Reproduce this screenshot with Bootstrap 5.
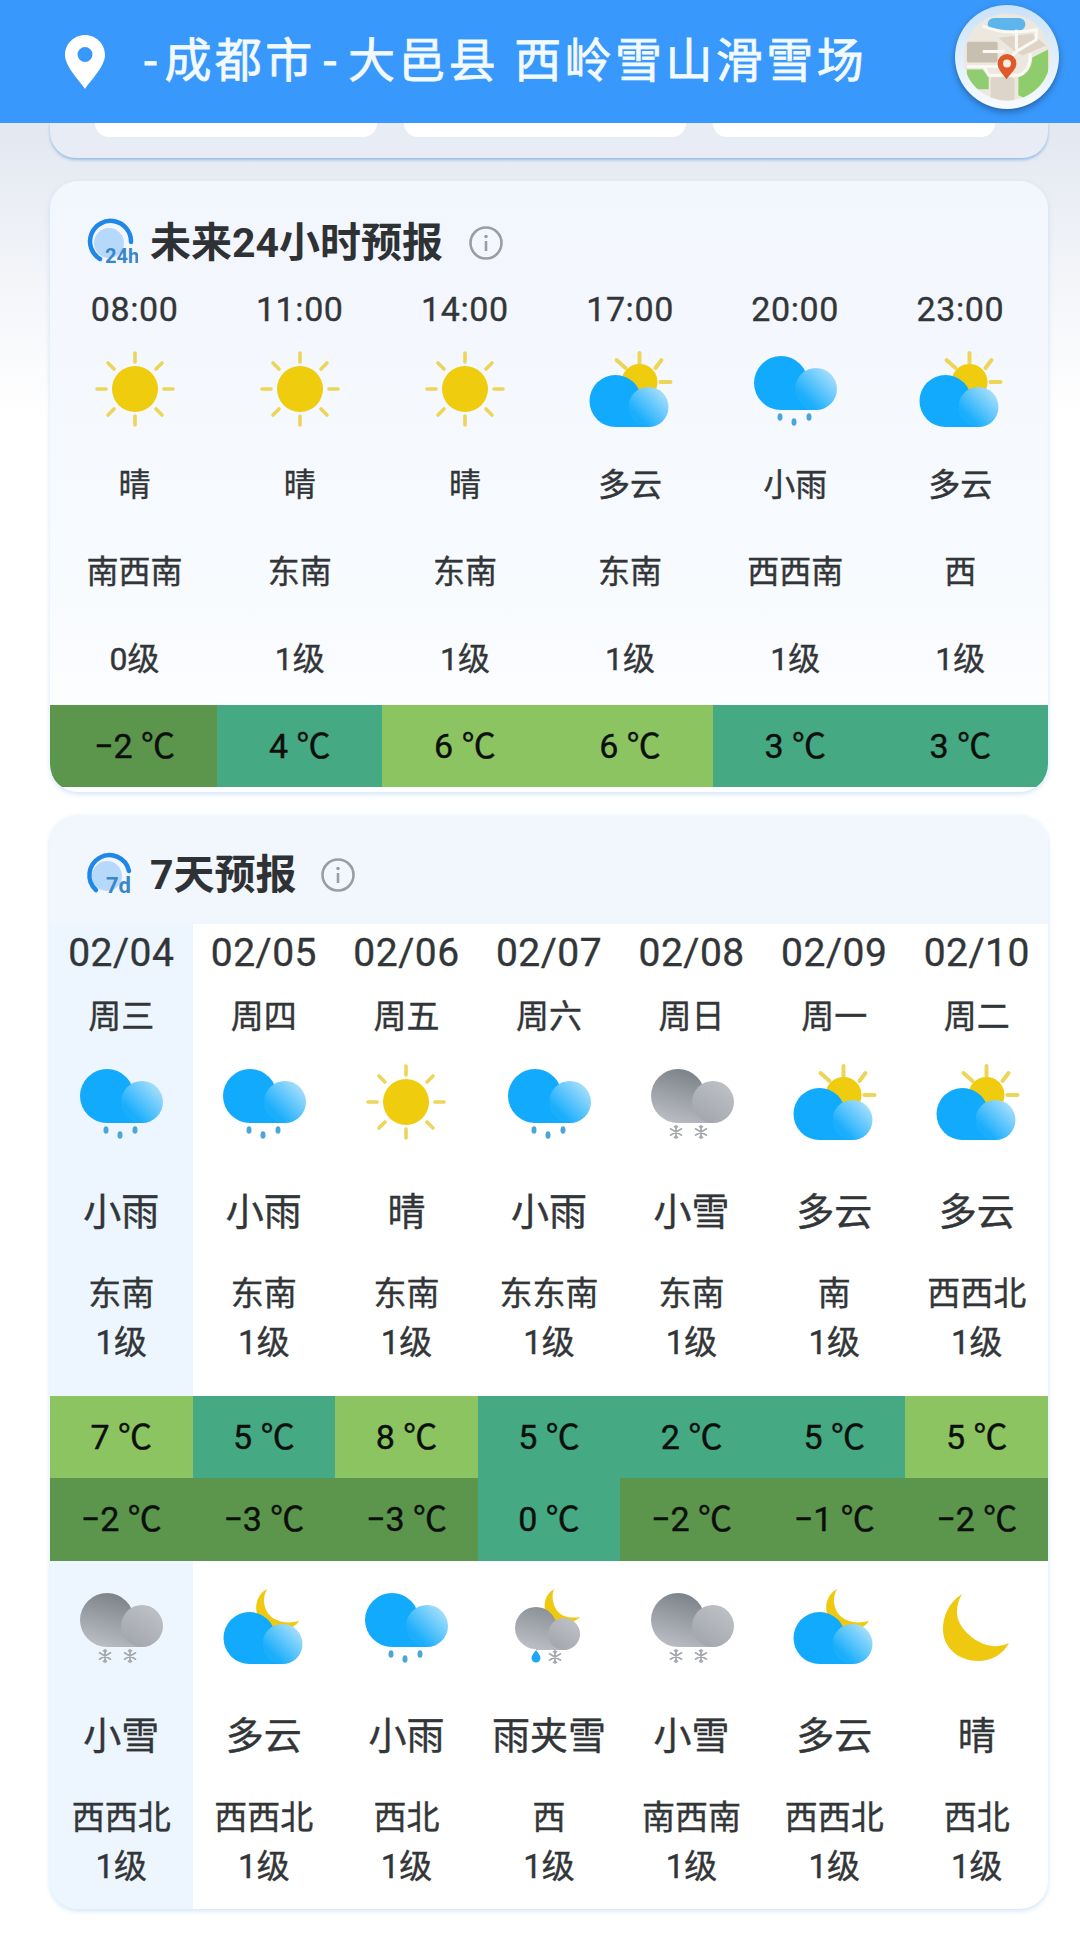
<!DOCTYPE html>
<html lang="zh">
  <head>
    <meta charset="UTF-8" />
    <meta name="viewport" content="width=device-width, initial-scale=1.0" />
    <title>天气预报</title>
    <link href="https://cdn.jsdelivr.net/npm/bootstrap@5.3.3/dist/css/bootstrap.min.css" rel="stylesheet" />
    <style>
      body {
        width: 1080px;
        height: 1936px;
        overflow: hidden;
        font-family: Roboto, "Noto Sans CJK SC", sans-serif;
        color: #333638;
        background: linear-gradient(#e2e7f0 120px, #f3f5f9 280px, #fff 420px);
      }

      .svg-defs {
        position: absolute;
        width: 0;
        height: 0;
      }

      /* top bar */
      .top-bar {
        height: 123px;
        background-color: #3998fb;
        padding: 0 21px 0 65px;
      }

      .top-title {
        margin-left: 35px;
        margin-bottom: 2px;
        font-size: 47px;
        letter-spacing: 3.4px;
        line-height: 1;
        color: #f2f9ff;
        -webkit-text-stroke: 0.8px #f2f9ff;
        white-space: pre;
      }

      .top-dash {
        margin: 0 4px;
      }

      .top-dash.wide-dash {
        margin: 0 8px;
      }

      .map-btn {
        margin-bottom: 9px;
        filter: drop-shadow(0 3px 3px rgba(20, 60, 110, 0.55));
      }

      /* piece of the card scrolled under the bar */
      .peek-card {
        height: 35px;
        margin: 0 32px 23px 50px;
        padding: 0 53px 0 45px;
        background-color: #e8edf5;
        border-radius: 0 0 26px 26px;
        box-shadow: 0 2px 3px rgba(120, 170, 225, 0.7);
      }

      .peek-tile {
        width: 282px;
        height: 14px;
        background-color: #fff;
        border-radius: 0 0 14px 14px;
      }

      /* forecast cards */
      .fc-card {
        margin: 0 32px 23px 50px;
        border-radius: 28px;
        overflow: hidden;
        box-shadow: 0 2px 5px rgba(150, 195, 240, 0.45);
      }

      .fc-day {
        height: 611px;
        background: linear-gradient(#f2f6fd, #f7fafe 60%, #fdfeff);
      }

      .fc-week {
        height: 1094px;
        background-color: #fff;
      }

      .fc-head {
        padding-left: 32px;
        font-size: 41px;
        font-weight: 700;
        line-height: 1;
        color: #2f3235;
      }

      .fc-day .fc-head {
        height: 105px;
        padding-top: 19px;
      }

      .fc-week .fc-head {
        height: 109px;
        padding-top: 11px;
        background-color: #f2f6fd;
      }

      .head-icon {
        margin-right: 12px;
      }

      .info-icon {
        margin-left: 26px;
      }

      .fc-week .info-icon {
        margin-left: 24px;
      }

      .wx-icon {
        display: block;
        width: 90px;
        height: 80px;
        margin: 0 auto;
      }

      /* 24 hour rows, the columns sit a little off the card edges */
      .hr-row {
        padding: 0 5px 0 2px;
      }

      .hr-band {
        background: linear-gradient(90deg, #5b964c 50%, #45a983 50%);
      }

      .hr-time {
        font-size: 34px;
        line-height: 46px;
        margin-bottom: 18px;
        letter-spacing: 0.6px;
        -webkit-text-stroke: 0.35px #333638;
      }

      .hr-line {
        font-size: 32px;
        line-height: 60px;
        margin-top: 27px;
        -webkit-text-stroke: 0.4px #333638;
      }

      .hr-line.first-line {
        margin-top: 25px;
      }

      .hr-line.last-line {
        margin-top: 27px;
        margin-bottom: 16px;
      }

      /* temperature bands */
      .temp-cell {
        height: 82px;
        font-size: 34px;
        line-height: 78px;
        color: #0c0f0c;
        -webkit-text-stroke: 0.4px #0c0f0c;
      }

      .deg {
        font-family: "Noto Sans CJK SC", sans-serif;
      }

      .wk-band .temp-cell {
        height: 82.5px;
      }

      .temp-cold {
        background-color: #5b964c;
      }

      .temp-cool {
        background-color: #45a983;
      }

      .temp-mild {
        background-color: #8cc462;
      }

      /* 7 day columns */
      .wk-top {
        padding-bottom: 28.5px;
      }

      .wk-bottom {
        padding-top: 26px;
        padding-bottom: 18px;
      }

      .today-col {
        background-color: #edf6fe;
      }

      .wk-date {
        font-size: 39px;
        line-height: 58px;
        letter-spacing: 0.5px;
        -webkit-text-stroke: 0.35px #333638;
      }

      .wk-name {
        font-size: 33px;
        line-height: 50px;
        margin-top: 10px;
        margin-bottom: 21px;
        -webkit-text-stroke: 0.4px #333638;
      }

      .wk-text {
        font-size: 38px;
        line-height: 56px;
        margin-top: 41px;
        margin-bottom: 29px;
        -webkit-text-stroke: 0.4px #333638;
      }

      .wk-wind {
        font-size: 33px;
        line-height: 49px;
        -webkit-text-stroke: 0.4px #333638;
      }
    </style>
  </head>
  <body class="m-0">
    <!-- shared weather icons -->
    <svg class="svg-defs" xmlns="http://www.w3.org/2000/svg">
      <defs>
        <linearGradient id="blueSoft" x1="0" y1="1" x2="1" y2="0">
          <stop offset="0.25" stop-color="#1aaefc" />
          <stop offset="1" stop-color="#c4e9fb" />
        </linearGradient>
        <linearGradient id="grayBig" gradientUnits="userSpaceOnUse" x1="45" y1="8" x2="30" y2="60">
          <stop offset="0" stop-color="#7c8289" />
          <stop offset="1" stop-color="#b9bcc2" />
        </linearGradient>
        <linearGradient id="graySoft" x1="0.8" y1="0.1" x2="0.2" y2="1">
          <stop offset="0" stop-color="#bcbfc4" />
          <stop offset="1" stop-color="#a2a6ac" />
        </linearGradient>
        <g id="rays" stroke="#edd55a" stroke-width="3.6" stroke-linecap="round" fill="none">
          <path d="M45 3v9M45 66v9M7 39h9M74 39h9M18 13l6 6M66 59l6 6M72 13l-6 6M24 59l-6 6" />
        </g>
        <g id="flake" stroke="#a4a7ac" stroke-width="1.6" stroke-linecap="round">
          <path d="M0-6.500v13M-5.600-3.200l11.200 6.400M-5.600 3.200l11.200-6.400" />
          <path d="M-1.500-5.500l1.500 1.500 1.500-1.500M-1.500 5.500l1.500-1.500 1.500 1.500" fill="none" />
        </g>
        <g id="cloudLow">
          <circle cx="30.500" cy="51" r="26" fill="#12aafc" />
          <rect x="30.500" y="57" width="33" height="20" fill="#12aafc" />
          <circle cx="63.500" cy="57" r="20" fill="url(#blueSoft)" />
        </g>
      </defs>
      <symbol id="ic-sun" viewBox="0 0 90 80">
        <use href="#rays" />
        <circle cx="45" cy="39" r="23" fill="#efcc0e" />
      </symbol>
      <symbol id="ic-partly" viewBox="0 0 90 80">
        <path d="M54.500 3v10M31.500 10l9 8M76.500 10l-6 8M75.500 32h10" stroke="#edd55a" stroke-width="4" stroke-linecap="round" />
        <circle cx="54.500" cy="32" r="18" fill="#efcc0e" />
        <use href="#cloudLow" />
      </symbol>
      <symbol id="ic-rain" viewBox="0 0 90 80">
        <circle cx="31" cy="33" r="27" fill="#12aafc" />
        <rect x="31" y="40" width="35" height="20" fill="#12aafc" />
        <circle cx="66" cy="39" r="21" fill="url(#blueSoft)" />
        <ellipse cx="30" cy="67" rx="2.500" ry="3.800" fill="#4aa5d8" />
        <ellipse cx="44" cy="72" rx="2.500" ry="3.800" fill="#4aa5d8" />
        <ellipse cx="59" cy="67" rx="2.500" ry="3.800" fill="#4aa5d8" />
      </symbol>
      <symbol id="ic-snow" viewBox="0 0 90 80">
        <circle cx="31" cy="33" r="27" fill="url(#grayBig)" />
        <rect x="31" y="40" width="35" height="20" fill="url(#grayBig)" />
        <circle cx="66" cy="39" r="21" fill="url(#graySoft)" />
        <use href="#flake" x="29" y="69" />
        <use href="#flake" x="54" y="69" />
      </symbol>
      <symbol id="ic-moon-cloud" viewBox="0 0 90 80">
        <path d="M48 2C32 10 32 40 60 44 68 44 76 40 80 34 66 38 50 34 46 20 44 14 45 8 48 2Z" fill="#efc90f" />
        <use href="#cloudLow" />
      </symbol>
      <symbol id="ic-sleet" viewBox="0 0 90 80">
        <path d="M50 2C36 10 37 34 58 37 65 37 72 34 76 30 64 32 54 29 50 18 48 12 48 7 50 2Z" fill="#efc90f" />
        <circle cx="32" cy="41" r="21" fill="url(#grayBig)" />
        <rect x="32" y="47" width="28" height="16" fill="url(#grayBig)" />
        <circle cx="60" cy="47" r="16" fill="url(#graySoft)" />
        <path d="M32 63c-3 4-4.500 6-4.500 8a4.500 4.500 0 0 0 9 0c0-2-1.500-4-4.500-8Z" fill="#1ea7f5" />
        <use href="#flake" x="51" y="70" />
      </symbol>
      <symbol id="ic-moon" viewBox="0 0 90 80">
        <path d="M30 7C16 16 11 30 11 42 11 62 28 74 46 74 60 74 71 67 77 56 68 60 60 60 52 57 36 51 24 36 25 24 25 18 27 12 30 7Z" fill="#efc90f" />
      </symbol>
    </svg>

    <header class="top-bar d-flex align-items-center">
      <svg width="40" height="54" viewBox="0 0 40 54" class="flex-shrink-0">
        <path fill="#fff" fill-rule="evenodd" d="M20 0C31 0 40 9 40 20 40 31 27 44 20 54 13 44 0 31 0 20 0 9 9 0 20 0ZM20 12a7.500 7.500 0 1 0 0 15 7.500 7.500 0 0 0 0-15Z" />
      </svg>
      <div class="top-title flex-grow-1"><span class="top-dash">-</span>成都市<span class="top-dash wide-dash">-</span>大邑县 西岭雪山滑雪场</div>
      <svg class="map-btn flex-shrink-0" width="104" height="104" viewBox="10 5 105 105">
        <defs>
          <linearGradient id="mapRim" x1="0" y1="0" x2="0" y2="1">
            <stop offset="0" stop-color="#c9e2f8" />
            <stop offset="1" stop-color="#f8fbfd" />
          </linearGradient>
          <clipPath id="mapClip"><circle cx="62.500" cy="57.500" r="44" /></clipPath>
        </defs>
        <circle cx="62.500" cy="57.500" r="52.500" fill="url(#mapRim)" />
        <g clip-path="url(#mapClip)">
          <rect x="15" y="10" width="95" height="95" fill="#ece7df" />
          <rect x="43" y="18" width="38" height="13" rx="6.500" fill="#5cb6ec" />
          <path d="M54 38 88 34 102 46 78 56 68 50Z" fill="#ded5c8" />
          <rect x="22" y="42" width="31" height="21" rx="2" fill="#c9bfb0" />
          <path d="M22 70H38L44 78V90H22Z" fill="#90cc70" />
          <path d="M74 96V78C82 76 88 68 88 58L104 50V92L82 100Z" fill="#8fcd6c" />
          <rect x="46" y="78" width="24" height="24" rx="3" fill="#ddd5ca" />
          <path d="M38 26Q60 36 92 30V40L72 52 58 66M22 67H56M38 52H60M86 54Q86 72 74 76H44L40 68M72 30V50" fill="none" stroke="#fbf9f4" stroke-width="3" />
        </g>
        <path d="M62 80C58 74 53 70 53 64A9.500 9.500 0 0 1 72 64C72 70 66 74 62 80Z" fill="#e0592a" />
        <circle cx="62.500" cy="64" r="4" fill="#fbeee4" />
      </svg>
    </header>

    <div class="peek-card d-flex justify-content-between">
      <div class="peek-tile"></div>
      <div class="peek-tile"></div>
      <div class="peek-tile"></div>
    </div>

    <!-- 24 hour forecast -->
    <section class="fc-card fc-day">
      <div class="fc-head d-flex align-items-center">
        <svg class="head-icon" width="56" height="52" viewBox="0 0 56 52">
          <circle cx="27" cy="26" r="15" fill="#b5d8fb" />
          <path d="M49 25A20.500 20.500 0 1 0 18 42" fill="none" stroke="#1f87e8" stroke-width="4.500" stroke-linecap="round" />
          <text x="23" y="46" font-size="20" font-family="Roboto, sans-serif" fill="#3a87c8">24h</text>
        </svg>
        <span>未来24小时预报</span>
        <svg class="info-icon" width="34" height="34" viewBox="0 0 34 34">
          <circle cx="17" cy="17" r="15.500" fill="none" stroke="#9a9ea3" stroke-width="2.600" />
          <circle cx="17" cy="10.500" r="1.800" fill="#9a9ea3" />
          <path d="M17 15v10" stroke="#9a9ea3" stroke-width="2.600" />
        </svg>
      </div>
      <div class="row g-0 text-center hr-row">
        <div class="col-2"><div class="hr-time">08:00</div><svg class="wx-icon"><use href="#ic-sun" /></svg><div class="hr-line first-line">晴</div><div class="hr-line">南西南</div><div class="hr-line last-line">0级</div></div>
        <div class="col-2"><div class="hr-time">11:00</div><svg class="wx-icon"><use href="#ic-sun" /></svg><div class="hr-line first-line">晴</div><div class="hr-line">东南</div><div class="hr-line last-line">1级</div></div>
        <div class="col-2"><div class="hr-time">14:00</div><svg class="wx-icon"><use href="#ic-sun" /></svg><div class="hr-line first-line">晴</div><div class="hr-line">东南</div><div class="hr-line last-line">1级</div></div>
        <div class="col-2"><div class="hr-time">17:00</div><svg class="wx-icon"><use href="#ic-partly" /></svg><div class="hr-line first-line">多云</div><div class="hr-line">东南</div><div class="hr-line last-line">1级</div></div>
        <div class="col-2"><div class="hr-time">20:00</div><svg class="wx-icon"><use href="#ic-rain" /></svg><div class="hr-line first-line">小雨</div><div class="hr-line">西西南</div><div class="hr-line last-line">1级</div></div>
        <div class="col-2"><div class="hr-time">23:00</div><svg class="wx-icon"><use href="#ic-partly" /></svg><div class="hr-line first-line">多云</div><div class="hr-line">西</div><div class="hr-line last-line">1级</div></div>
      </div>
      <div class="row g-0 text-center hr-row hr-band">
        <div class="col-2 temp-cell temp-cold">−2 <span class="deg">℃</span></div>
        <div class="col-2 temp-cell temp-cool">4 <span class="deg">℃</span></div>
        <div class="col-2 temp-cell temp-mild">6 <span class="deg">℃</span></div>
        <div class="col-2 temp-cell temp-mild">6 <span class="deg">℃</span></div>
        <div class="col-2 temp-cell temp-cool">3 <span class="deg">℃</span></div>
        <div class="col-2 temp-cell temp-cool">3 <span class="deg">℃</span></div>
      </div>
    </section>

    <!-- 7 day forecast -->
    <section class="fc-card fc-week">
      <div class="fc-head d-flex align-items-center">
        <svg class="head-icon" width="56" height="52" viewBox="0 0 56 52">
          <circle cx="25" cy="27" r="15" fill="#b5d8fb" />
          <path d="M47 22A20 20 0 1 0 14 41" fill="none" stroke="#1f87e8" stroke-width="4.500" stroke-linecap="round" />
          <text x="49" y="44" text-anchor="end" font-size="22" font-family="Roboto, sans-serif" fill="#3a87c8">7d</text>
        </svg>
        <span>7天预报</span>
        <svg class="info-icon" width="34" height="34" viewBox="0 0 34 34">
          <circle cx="17" cy="17" r="15.500" fill="none" stroke="#9a9ea3" stroke-width="2.600" />
          <circle cx="17" cy="10.500" r="1.800" fill="#9a9ea3" />
          <path d="M17 15v10" stroke="#9a9ea3" stroke-width="2.600" />
        </svg>
      </div>
      <div class="row g-0 text-center">
        <div class="col wk-top today-col"><div class="wk-date">02/04</div><div class="wk-name">周三</div><svg class="wx-icon"><use href="#ic-rain" /></svg><div class="wk-text">小雨</div><div class="wk-wind">东南</div><div class="wk-wind">1级</div></div>
        <div class="col wk-top"><div class="wk-date">02/05</div><div class="wk-name">周四</div><svg class="wx-icon"><use href="#ic-rain" /></svg><div class="wk-text">小雨</div><div class="wk-wind">东南</div><div class="wk-wind">1级</div></div>
        <div class="col wk-top"><div class="wk-date">02/06</div><div class="wk-name">周五</div><svg class="wx-icon"><use href="#ic-sun" /></svg><div class="wk-text">晴</div><div class="wk-wind">东南</div><div class="wk-wind">1级</div></div>
        <div class="col wk-top"><div class="wk-date">02/07</div><div class="wk-name">周六</div><svg class="wx-icon"><use href="#ic-rain" /></svg><div class="wk-text">小雨</div><div class="wk-wind">东东南</div><div class="wk-wind">1级</div></div>
        <div class="col wk-top"><div class="wk-date">02/08</div><div class="wk-name">周日</div><svg class="wx-icon"><use href="#ic-snow" /></svg><div class="wk-text">小雪</div><div class="wk-wind">东南</div><div class="wk-wind">1级</div></div>
        <div class="col wk-top"><div class="wk-date">02/09</div><div class="wk-name">周一</div><svg class="wx-icon"><use href="#ic-partly" /></svg><div class="wk-text">多云</div><div class="wk-wind">南</div><div class="wk-wind">1级</div></div>
        <div class="col wk-top"><div class="wk-date">02/10</div><div class="wk-name">周二</div><svg class="wx-icon"><use href="#ic-partly" /></svg><div class="wk-text">多云</div><div class="wk-wind">西西北</div><div class="wk-wind">1级</div></div>
      </div>
      <div class="wk-band text-center">
        <div class="row g-0">
          <div class="col temp-cell temp-mild">7 <span class="deg">℃</span></div>
          <div class="col temp-cell temp-cool">5 <span class="deg">℃</span></div>
          <div class="col temp-cell temp-mild">8 <span class="deg">℃</span></div>
          <div class="col temp-cell temp-cool">5 <span class="deg">℃</span></div>
          <div class="col temp-cell temp-cool">2 <span class="deg">℃</span></div>
          <div class="col temp-cell temp-cool">5 <span class="deg">℃</span></div>
          <div class="col temp-cell temp-mild">5 <span class="deg">℃</span></div>
        </div>
        <div class="row g-0">
          <div class="col temp-cell temp-cold">−2 <span class="deg">℃</span></div>
          <div class="col temp-cell temp-cold">−3 <span class="deg">℃</span></div>
          <div class="col temp-cell temp-cold">−3 <span class="deg">℃</span></div>
          <div class="col temp-cell temp-cool">0 <span class="deg">℃</span></div>
          <div class="col temp-cell temp-cold">−2 <span class="deg">℃</span></div>
          <div class="col temp-cell temp-cold">−1 <span class="deg">℃</span></div>
          <div class="col temp-cell temp-cold">−2 <span class="deg">℃</span></div>
        </div>
      </div>
      <div class="row g-0 text-center">
        <div class="col wk-bottom today-col"><svg class="wx-icon"><use href="#ic-snow" /></svg><div class="wk-text">小雪</div><div class="wk-wind">西西北</div><div class="wk-wind">1级</div></div>
        <div class="col wk-bottom"><svg class="wx-icon"><use href="#ic-moon-cloud" /></svg><div class="wk-text">多云</div><div class="wk-wind">西西北</div><div class="wk-wind">1级</div></div>
        <div class="col wk-bottom"><svg class="wx-icon"><use href="#ic-rain" /></svg><div class="wk-text">小雨</div><div class="wk-wind">西北</div><div class="wk-wind">1级</div></div>
        <div class="col wk-bottom"><svg class="wx-icon"><use href="#ic-sleet" /></svg><div class="wk-text">雨夹雪</div><div class="wk-wind">西</div><div class="wk-wind">1级</div></div>
        <div class="col wk-bottom"><svg class="wx-icon"><use href="#ic-snow" /></svg><div class="wk-text">小雪</div><div class="wk-wind">南西南</div><div class="wk-wind">1级</div></div>
        <div class="col wk-bottom"><svg class="wx-icon"><use href="#ic-moon-cloud" /></svg><div class="wk-text">多云</div><div class="wk-wind">西西北</div><div class="wk-wind">1级</div></div>
        <div class="col wk-bottom"><svg class="wx-icon"><use href="#ic-moon" /></svg><div class="wk-text">晴</div><div class="wk-wind">西北</div><div class="wk-wind">1级</div></div>
      </div>
    </section>

    <script src="https://cdn.jsdelivr.net/npm/bootstrap@5.3.3/dist/js/bootstrap.bundle.min.js"></script>
  </body>
</html>
